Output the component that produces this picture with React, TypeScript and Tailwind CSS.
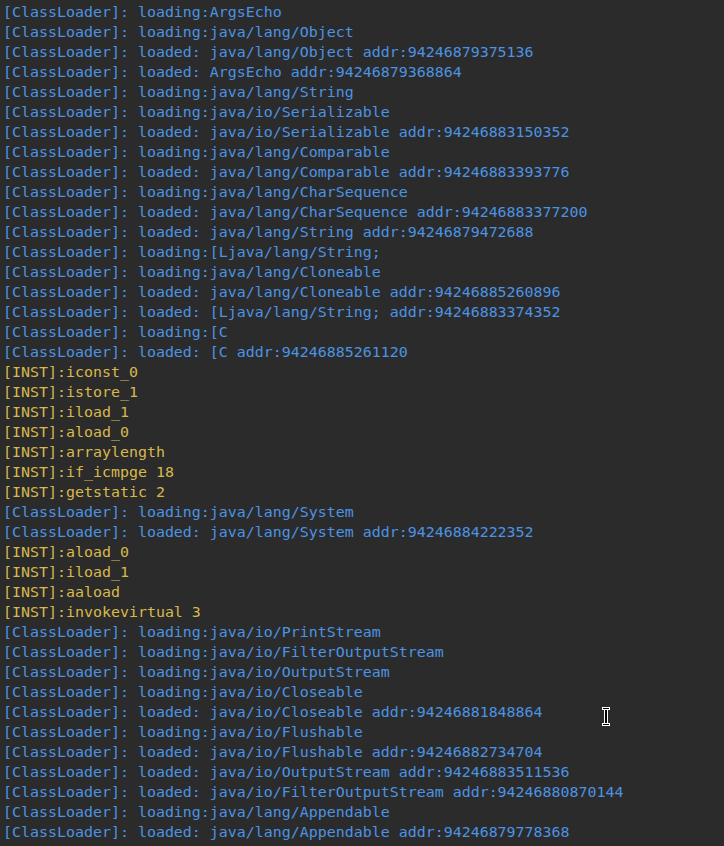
const lines: [string, string][] = [
  ['c', '[ClassLoader]: loading:ArgsEcho'],
  ['c', '[ClassLoader]: loading:java/lang/Object'],
  ['c', '[ClassLoader]: loaded: java/lang/Object addr:94246879375136'],
  ['c', '[ClassLoader]: loaded: ArgsEcho addr:94246879368864'],
  ['c', '[ClassLoader]: loading:java/lang/String'],
  ['c', '[ClassLoader]: loading:java/io/Serializable'],
  ['c', '[ClassLoader]: loaded: java/io/Serializable addr:94246883150352'],
  ['c', '[ClassLoader]: loading:java/lang/Comparable'],
  ['c', '[ClassLoader]: loaded: java/lang/Comparable addr:94246883393776'],
  ['c', '[ClassLoader]: loading:java/lang/CharSequence'],
  ['c', '[ClassLoader]: loaded: java/lang/CharSequence addr:94246883377200'],
  ['c', '[ClassLoader]: loaded: java/lang/String addr:94246879472688'],
  ['c', '[ClassLoader]: loading:[Ljava/lang/String;'],
  ['c', '[ClassLoader]: loading:java/lang/Cloneable'],
  ['c', '[ClassLoader]: loaded: java/lang/Cloneable addr:94246885260896'],
  ['c', '[ClassLoader]: loaded: [Ljava/lang/String; addr:94246883374352'],
  ['c', '[ClassLoader]: loading:[C'],
  ['c', '[ClassLoader]: loaded: [C addr:94246885261120'],
  ['i', '[INST]:iconst_0'],
  ['i', '[INST]:istore_1'],
  ['i', '[INST]:iload_1'],
  ['i', '[INST]:aload_0'],
  ['i', '[INST]:arraylength'],
  ['i', '[INST]:if_icmpge 18'],
  ['i', '[INST]:getstatic 2'],
  ['c', '[ClassLoader]: loading:java/lang/System'],
  ['c', '[ClassLoader]: loaded: java/lang/System addr:94246884222352'],
  ['i', '[INST]:aload_0'],
  ['i', '[INST]:iload_1'],
  ['i', '[INST]:aaload'],
  ['i', '[INST]:invokevirtual 3'],
  ['c', '[ClassLoader]: loading:java/io/PrintStream'],
  ['c', '[ClassLoader]: loading:java/io/FilterOutputStream'],
  ['c', '[ClassLoader]: loading:java/io/OutputStream'],
  ['c', '[ClassLoader]: loading:java/io/Closeable'],
  ['c', '[ClassLoader]: loaded: java/io/Closeable addr:94246881848864'],
  ['c', '[ClassLoader]: loading:java/io/Flushable'],
  ['c', '[ClassLoader]: loaded: java/io/Flushable addr:94246882734704'],
  ['c', '[ClassLoader]: loaded: java/io/OutputStream addr:94246883511536'],
  ['c', '[ClassLoader]: loaded: java/io/FilterOutputStream addr:94246880870144'],
  ['c', '[ClassLoader]: loading:java/lang/Appendable'],
  ['c', '[ClassLoader]: loaded: java/lang/Appendable addr:94246879778368'],
];

const App = () => {
  return (
    <div className="relative w-[724px] h-[846px] overflow-hidden bg-[#2b2b2b] pt-[2px] pl-[3px] font-['DejaVu_Sans_Mono',monospace] text-[14.95px] leading-[20px] whitespace-pre">
      {lines.map(([kind, text], i) => (
        <div key={i} className={kind === 'c' ? 'text-[#4b93e3]' : 'text-[#d8b84c]'}>
          {text}
        </div>
      ))}
      {/* mouse I-beam cursor */}
      <div className="absolute left-[602px] top-[707px] w-[8px] h-[19px] flex flex-col items-center">
        <div className="w-[8px] h-[3px] border border-white bg-black" />
        <div className="w-[4px] flex-1 border-x border-white bg-black" />
        <div className="w-[8px] h-[3px] border border-white bg-black" />
      </div>
    </div>
  );
};

export default App;
